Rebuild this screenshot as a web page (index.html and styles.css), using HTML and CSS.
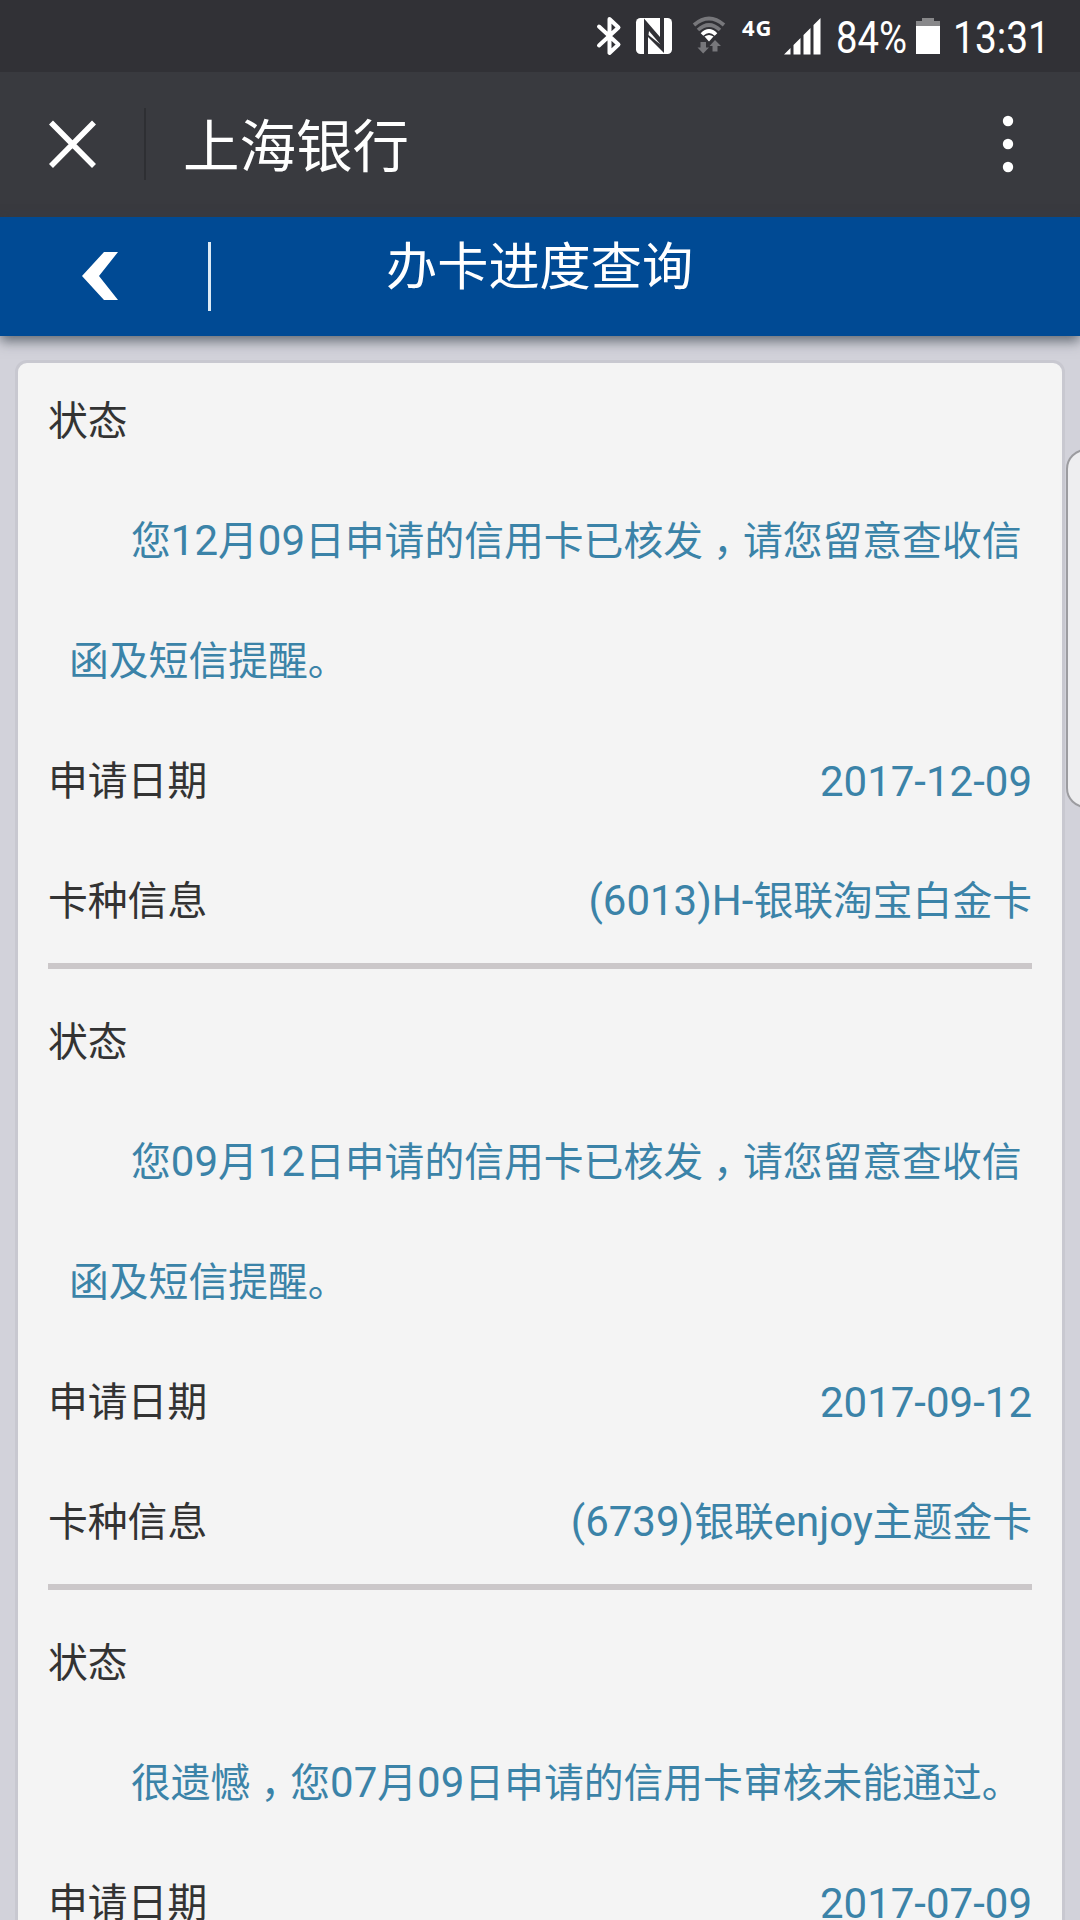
FILE: index.html
```html
<!DOCTYPE html>
<html lang="zh-CN">
<head>
<meta charset="UTF-8">
<title>办卡进度查询</title>
<link rel="stylesheet" href="styles.css">
</head>
<body>
<div class="screen">
  <header class="status-bar">
    <svg class="bluetooth" width="26" height="40" viewBox="0 0 26 40" fill="none" stroke="#fff" stroke-width="4" stroke-linejoin="round" stroke-linecap="round"><path d="M3 10.500L22.500 28.500L13.500 37V3L22.500 11.500L3 29.500"/></svg>
    <svg class="nfc" width="38" height="38" viewBox="0 0 38 38"><rect x="1" y="1" width="36" height="36" rx="4.500" fill="#fff"/><path d="M9 1.500L25 20V1H29V36L13 20V37H9Z" fill="#313136"/><path d="M13 11.500L28 30" stroke="#313136" stroke-width="2"/><path d="M14 14L25.500 27.500L13.500 18Z" fill="#fff"/></svg>
    <svg class="wifi" width="34" height="38" viewBox="0 0 34 38" fill="none"><g stroke="#77777b" stroke-width="3.7"><path d="M2 9Q17-4 32 9"/><path d="M6 14Q17 4 28 14"/></g><path d="M10 18.500Q17 11.500 24 18.500" stroke="#fff" stroke-width="3.700"/><path d="M12.500 20.500Q17 17.500 21.500 20.500L17 25.500Z" fill="#fff"/><path d="M8.500 26H14V31.500H17L11.200 37.500L5.500 31.500H8.500ZM20.500 35.500H25.500V30H29L23 24L17.500 30H20.500Z" fill="#77777b"/></svg>
    <span class="network">4G</span>
    <svg class="signal" width="37" height="37" viewBox="0 0 37 37" fill="#fff"><path d="M0 36.500L6.500 30V36.500ZM9.500 27L16.500 20V36.500H9.500ZM19.500 17L26.500 10V36.500H19.500ZM29.500 7L36.500 0V36.500H29.500Z"/></svg>
    <svg class="percent" width="72" height="60" viewBox="0 0 72 60"><text x="0" y="47" font-size="45" textLength="71" lengthAdjust="spacingAndGlyphs" fill="#fff">84%</text></svg>
    <svg class="battery" width="24" height="36" viewBox="0 0 24 36"><path d="M0 3H6V0H18V3H24V8H0Z" fill="#88888a"/><path d="M0 8H24V36H0Z" fill="#fff"/></svg>
    <svg class="clock" width="98" height="60" viewBox="0 0 98 60"><text x="-1" y="47" font-size="45" textLength="97" lengthAdjust="spacingAndGlyphs" fill="#fff">13:31</text></svg>
  </header>
  <header class="app-bar">
    <svg class="close" width="48" height="48" viewBox="0 0 48 48" stroke="#fff" stroke-width="5.600"><path d="M2 2.500L45 46M45 2.500L2 46"/></svg>
    <i class="app-divider"></i>
    <h1 class="app-title">上海银行</h1>
    <svg class="more" width="12" height="58" viewBox="0 0 12 58" fill="#fff"><circle cx="6" cy="6" r="5.200"/><circle cx="6" cy="29" r="5.200"/><circle cx="6" cy="52" r="5.200"/></svg>
  </header>
  <nav class="page-bar">
    <svg class="back" width="36" height="48" viewBox="0 0 36 48"><path d="M0 24L22 0H36L17 24L36 48H22Z" fill="#fff"/></svg>
    <i class="page-divider"></i>
    <h2 class="page-title">办卡进度查询</h2>
  </nav>
  <main class="content">
    <div class="card">
      <section class="record">
        <div class="row">状态</div>
        <p class="message">您<span class="latin">12</span>月<span class="latin">09</span>日申请的信用卡已核发<span class="comma">，</span>请您留意查收信<br>函及短信提醒。</p>
        <div class="row"><span>申请日期</span><span class="value latin">2017-12-09</span></div>
        <div class="row"><span>卡种信息</span><span class="value"><span class="latin">(6013)H-</span>银联淘宝白金卡</span></div>
      </section>
      <section class="record">
        <div class="row">状态</div>
        <p class="message">您<span class="latin">09</span>月<span class="latin">12</span>日申请的信用卡已核发<span class="comma">，</span>请您留意查收信<br>函及短信提醒。</p>
        <div class="row"><span>申请日期</span><span class="value latin">2017-09-12</span></div>
        <div class="row"><span>卡种信息</span><span class="value"><span class="latin">(6739)</span>银联<span class="latin">enjoy</span>主题金卡</span></div>
      </section>
      <section class="record">
        <div class="row">状态</div>
        <p class="message">很遗憾<span class="comma">，</span>您<span class="latin">07</span>月<span class="latin">09</span>日申请的信用卡审核未能通过。</p>
        <div class="row"><span>申请日期</span><span class="value latin">2017-07-09</span></div>
      </section>
    </div>
  </main>
  <div class="edge-handle"></div>
</div>
</body>
</html>
```
FILE: styles.css
```css
* { box-sizing: border-box; }
body { margin: 0; }
h1, h2, p { margin: 0; font-weight: 400; }
svg { display: block; flex: none; overflow: visible; }

.screen {
  position: relative;
  display: flex;
  flex-direction: column;
  width: 1080px;
  height: 1920px;
  overflow: hidden;
  background: #d2d2da;
  font-family: Roboto, "Noto Sans CJK SC", sans-serif;
  color: #333;
}

.status-bar {
  display: flex;
  flex: none;
  align-items: center;
  justify-content: flex-end;
  height: 72px;
  padding-right: 28px;
  background: #313136;
}
.nfc { margin-left: 13px; }
.wifi { margin-left: 19px; margin-top: -2px; }
.network {
  width: 30px;
  margin: -18px 0 0 16px;
  font: 700 22px/26px "Noto Sans", sans-serif;
  letter-spacing: 1px;
  color: #fff;
}
.signal { margin-left: 12px; }
.percent { margin-left: 15px; }
.battery { margin-left: 8px; }
.clock { margin-left: 14px; }

.app-bar {
  display: flex;
  flex: none;
  align-items: center;
  height: 145px;
  padding: 0 66px 1px 49px;
  background: #393a3f;
}
.app-divider {
  width: 2px;
  height: 72px;
  margin-left: 47px;
  background: #2e2f33;
}
.app-title {
  margin: 7px 0 0 37px;
  font-size: 56.5px;
  line-height: 72px;
  color: #fff;
}
.more { margin-left: auto; }

.page-bar {
  display: flex;
  flex: none;
  align-items: flex-start;
  height: 119px;
  padding-left: 82px;
  background: #004a94;
  box-shadow: 0 5px 12px rgba(50, 60, 70, .7);
}
.back { margin-top: 35px; }
.page-divider {
  width: 3px;
  height: 69px;
  margin: 25px 0 0 90px;
  background: #dceaf5;
}
.page-title {
  margin: 15px 0 0 175px;
  font-size: 51.2px;
  line-height: 72px;
  color: #fff;
}

.content {
  flex: 1;
  min-height: 0;
  padding: 24px 15px 0;
}
.card {
  height: 1700px;
  padding: 0 30px;
  border: 3px solid #c8c8d0;
  border-radius: 12px;
  background: #f4f4f4;
  font-size: 39.8px;
  line-height: 120px;
  white-space: nowrap;
}
.record {
  margin-bottom: 14px;
  padding-bottom: 1px;
  border-bottom: 6px solid #cbc7c9;
}
.record:first-child { margin-top: -1px; }
.record:last-child { border: 0; }
.row {
  display: flex;
  justify-content: space-between;
  height: 120px;
}
.message {
  height: 240px;
  padding-left: 21px;
  text-indent: 62px;
  color: #3b83a8;
}
.record:last-child .message { height: 120px; }
.value { color: #3b83a8; }
.latin { font-size: 42px; }
.message .latin,
.value .latin { line-height: 1; }
.comma {
  margin: 0 10px;
  font-feature-settings: "halt";
}

.edge-handle {
  position: absolute;
  top: 449px;
  right: -26px;
  width: 40px;
  height: 359px;
  border: 2px solid #9c9ca0;
  border-radius: 26px;
  background: #eeeef0;
}
```
